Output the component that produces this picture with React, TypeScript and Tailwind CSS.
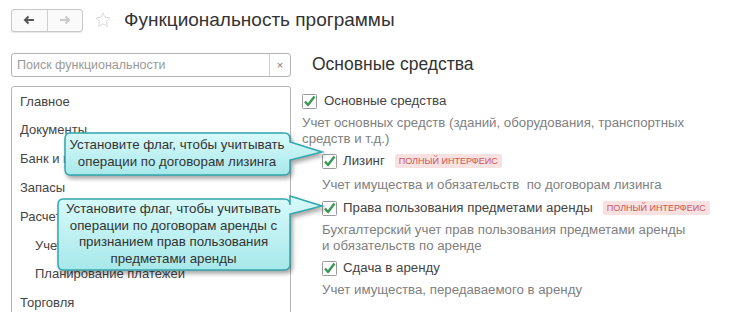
import React from 'react';

const font = { fontFamily: '"Liberation Sans", Arial, sans-serif' };

function Check() {
  return (
    <svg width="15" height="15" viewBox="0 0 15 15" className="shrink-0">
      <rect x="0.5" y="0.5" width="14" height="14" rx="1" fill="#fff" stroke="#9a9a9a" />
      <path d="M3 7.5 L6 11 L12.5 2.5" fill="none" stroke="#3a9a55" strokeWidth="2.4" strokeLinejoin="round" />
    </svg>
  );
}

function Badge() {
  return (
    <span className="ml-[10px] px-[4px] h-[14px] leading-[14px] text-[9px] text-[#c55] bg-[#f8e1e1] rounded-[2px]">
      ПОЛНЫЙ ИНТЕРФЕИС
    </span>
  );
}

function Callout({ left, top, width, height, tipY, lines }: { left: number; top: number; width: number; height: number; tipY: number; lines: string[] }) {
  const w = width + 34;
  return (
    <div className="absolute" style={{ left, top, width: w, height: height + 6 }}>
      <svg width={w} height={height + 6} className="absolute left-0 top-0 overflow-visible">
        <defs>
          <linearGradient id={`g${top}`} x1="0" y1="0" x2="0" y2="1">
            <stop offset="0" stopColor="#d8fafa" />
            <stop offset="1" stopColor="#a8e8ea" />
          </linearGradient>
        </defs>
        <path
          d={`M6 1 H${width - 6} Q${width} 1 ${width} 7 V${tipY - 14} L${w - 2} ${tipY - 4} L${width} ${tipY + 4} V${height - 6} Q${width} ${height} ${width - 6} ${height} H6 Q1 ${height} 1 ${height - 6} V7 Q1 1 6 1 Z`}
          fill={`url(#g${top})`}
          stroke="#2fa7ad"
          strokeWidth="1.5"
          style={{ filter: 'drop-shadow(2px 3px 2px rgba(0,0,0,0.35))' }}
        />
      </svg>
      <div className="relative flex flex-col items-center justify-center text-[13.3px] leading-[16.5px] text-[#333] text-center whitespace-nowrap" style={{ width, height }}>
        {lines.map((l) => (
          <div key={l}>{l}</div>
        ))}
      </div>
    </div>
  );
}

export default function App() {
  const menu = [
    { t: 'Главное', i: false },
    { t: 'Документы', i: false },
    { t: 'Банк и касса', i: false },
    { t: 'Запасы', i: false },
    { t: 'Расчеты', i: false },
    { t: 'Учет НДС', i: true },
    { t: 'Планирование платежей', i: true },
    { t: 'Торговля', i: false },
  ];

  return (
    <div className="relative w-[729px] h-[312px] overflow-hidden bg-white text-[#444]" style={font}>
      <div className="flex items-center h-[40px] pl-[11px]">
        <div className="flex h-[23px] w-[72px] border border-[#c8c8c8] rounded-[3px] bg-[#fafafa] shadow-[0_1px_1px_rgba(0,0,0,0.1)]">
          <div className="flex-1 flex items-center justify-center border-r border-[#d0d0d0]">
            <svg width="12" height="10" viewBox="0 0 12 10">
              <path d="M11 5 H3 M5.5 1.5 L2 5 L5.5 8.5" fill="none" stroke="#555" strokeWidth="2" />
            </svg>
          </div>
          <div className="flex-1 flex items-center justify-center">
            <svg width="12" height="10" viewBox="0 0 12 10">
              <path d="M1 5 H9 M6.5 1.5 L10 5 L6.5 8.5" fill="none" stroke="#c8c8c8" strokeWidth="2" />
            </svg>
          </div>
        </div>
        <svg width="18" height="18" viewBox="0 0 24 24" className="ml-[11px]">
          <path d="M12 2.5 L14.8 8.6 L21.5 9.3 L16.5 13.8 L17.9 20.5 L12 17.1 L6.1 20.5 L7.5 13.8 L2.5 9.3 L9.2 8.6 Z" fill="none" stroke="#d8d8d8" strokeWidth="1.3" />
        </svg>
        <div className="ml-[12px] text-[19px] text-[#333]">Функциональность программы</div>
      </div>

      <div className="flex pl-[11px] pt-[13px]">
        <div className="w-[280px] shrink-0">
          <div className="flex h-[24px] border border-[#b5b5b5] rounded-[3px]">
            <div className="flex-1 flex items-center pl-[5px] text-[12.5px] text-[#9a9a9a]">Поиск функциональности</div>
            <div className="w-[21px] flex items-center justify-center border-l border-[#cfcfcf] text-[11px] text-[#777]">×</div>
          </div>
          <div className="mt-[9px] h-[240px] border border-[#b5b5b5] rounded-[3px] flex flex-col">
            {menu.map((m) => (
              <div key={m.t} className={`h-[28.8px] shrink-0 flex items-center text-[13px] text-[#444] ${m.i ? 'pl-[23px]' : 'pl-[8px]'}`}>
                {m.t}
              </div>
            ))}
          </div>
        </div>

        <div className="ml-[11px] flex-1">
          <div className="pl-[10px] text-[17.5px] text-[#333] leading-[20px] mt-[1px]">Основные средства</div>
          <div className="mt-[19px] flex flex-col text-[13.25px]">
            <div className="flex items-center h-[16px]">
              <Check />
              <span className="ml-[7px] text-[#444]">Основные средства</span>
            </div>
            <div className="mt-[6px] text-[#808080] leading-[16px]">
              Учет основных средств (зданий, оборудования, транспортных
              <br />
              средств и т.д.)
            </div>
            <div className="pl-[20px]">
              <div className="mt-[6px] flex items-center h-[16px]">
                <Check />
                <span className="ml-[6px] text-[#444]">Лизинг</span>
                <Badge />
              </div>
              <div className="mt-[8px] text-[#808080] leading-[16px] whitespace-pre">Учет имущества и обязательств  по договорам лизинга</div>
              <div className="mt-[7px] flex items-center h-[16px]">
                <Check />
                <span className="ml-[6px] text-[#444]">Права пользования предметами аренды</span>
                <Badge />
              </div>
              <div className="mt-[6px] text-[#808080] leading-[16px]">
                Бухгалтерский учет прав пользования предметами аренды
                <br />
                и обязательств по аренде
              </div>
              <div className="mt-[6px] flex items-center h-[16px]">
                <Check />
                <span className="ml-[6px] text-[#444]">Сдача в аренду</span>
              </div>
              <div className="mt-[6px] text-[#808080] leading-[16px]">Учет имущества, передаваемого в аренду</div>
            </div>
          </div>
        </div>
      </div>

      <Callout
        left={64}
        top={132}
        width={226}
        height={43}
        tipY={24}
        lines={['Установите флаг, чтобы учитывать', 'операции по договорам лизинга']}
      />
      <Callout
        left={57}
        top={198}
        width={233}
        height={72}
        tipY={12}
        lines={['Установите флаг, чтобы учитывать', 'операции по договорам аренды с', 'признанием прав пользования', 'предметами аренды']}
      />
    </div>
  );
}
